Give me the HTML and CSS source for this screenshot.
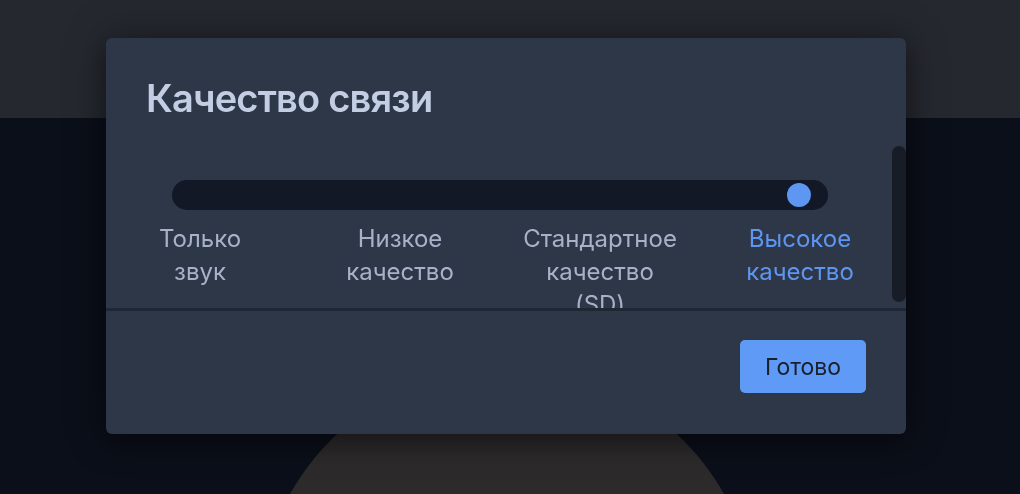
FILE: index.html
```html
<!DOCTYPE html>
<html lang="ru">
<head>
<meta charset="utf-8">
<title>Качество связи</title>
<link rel="stylesheet" href="styles.css">
</head>
<body>
<div class="app">
  <div class="topbar"></div>
  <div class="stage">
    <div class="avatar"></div>
  </div>
</div>

<div class="modal" role="dialog" aria-labelledby="dlg-title">
  <div class="modal-header">
    <h2 id="dlg-title" class="modal-title">Качество связи</h2>
  </div>
  <div class="modal-body">
    <div class="scroll-content">
      <div class="slider">
        <div class="track"><span class="thumb"></span></div>
      </div>
      <div class="labels">
        <div class="label">Только<br>звук</div>
        <div class="label">Низкое<br>качество</div>
        <div class="label">Стандартное<br>качество<br>(SD)</div>
        <div class="label active">Высокое<br>качество</div>
      </div>
    </div>
    <div class="scrollbar-thumb"></div>
  </div>
  <div class="modal-footer">
    <button class="btn-primary" type="button">Готово</button>
  </div>
</div>
</body>
</html>
```

FILE: styles.css
```css
* { box-sizing: border-box; }

html, body {
  margin: 0;
  height: 100%;
}

body {
  font-family: Inter, "Noto Sans", "Liberation Sans", sans-serif;
  background: #0b0f19;
  overflow: hidden;
}

.app {
  height: 494px;
  display: flex;
  flex-direction: column;
}

.topbar {
  height: 118px;
  background: #25282f;
  flex: none;
}

.stage {
  flex: 1;
  background: #0b0f19;
  overflow: hidden;
  display: flex;
  justify-content: center;
  padding-top: 249px;
  padding-right: 6px;
}

.avatar {
  width: 498px;
  height: 498px;
  border-radius: 50%;
  background: #2c2a2a;
  flex: none;
}

.modal {
  position: fixed;
  left: 106px;
  top: 38px;
  width: 800px;
  height: 396px;
  background: #2d3748;
  border-radius: 6px;
  box-shadow: 0 0 40px rgba(0, 0, 0, 0.35), 0 10px 25px rgba(0, 0, 0, 0.3);
  display: flex;
  flex-direction: column;
  overflow: hidden;
}

.modal-header {
  height: 108px;
  padding: 0 40px;
  flex: none;
}

.modal-title {
  margin: 0;
  padding-top: 36px;
  font-size: 38px;
  line-height: 48px;
  font-weight: 600;
  color: #c3cde3;
  letter-spacing: -0.8px;
}

.modal-body {
  position: relative;
  height: 165px;
  flex: none;
  overflow: hidden;
  padding-left: 2px;
  padding-right: 14px;
  border-bottom: 3px solid #1f2735;
}

.scroll-content {
  padding-top: 34px;
}

.scrollbar-thumb {
  position: absolute;
  top: 0;
  right: 0;
  width: 14px;
  height: 156px;
  border-radius: 7px;
  background: #171c26;
}

.slider {
  display: flex;
  justify-content: center;
}

.track {
  width: 656px;
  height: 30px;
  border-radius: 15px;
  background: #121825;
  display: flex;
  align-items: center;
  justify-content: flex-end;
  padding-right: 17px;
}

.thumb {
  width: 24px;
  height: 24px;
  border-radius: 50%;
  background: #5e97f1;
}

.labels {
  display: grid;
  grid-template-columns: repeat(4, 170px);
  column-gap: 30px;
  justify-content: center;
  margin-top: 12px;
}

.label {
  text-align: center;
  font-size: 24px;
  line-height: 33px;
  color: #a7b2c9;
}

.label.active {
  color: #5e95ef;
}

.modal-footer {
  flex: 1;
  display: flex;
  justify-content: flex-end;
  align-items: flex-start;
  padding: 29px 40px 0;
}

.btn-primary {
  width: 126px;
  height: 53px;
  border: none;
  border-radius: 5px;
  background: #5f9af6;
  color: #1a202c;
  font-family: inherit;
  font-size: 23px;
  cursor: pointer;
}
```
